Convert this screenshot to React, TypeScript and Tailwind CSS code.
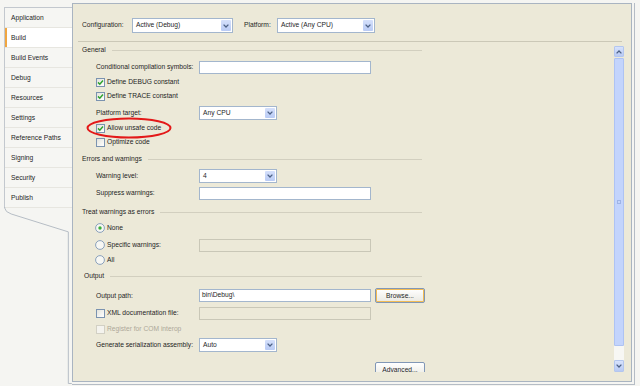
import React from 'react';

const tabs = ['Application', 'Build', 'Build Events', 'Debug', 'Resources', 'Settings', 'Reference Paths', 'Signing', 'Security', 'Publish'];

const Chevron = ({ up = false }: { up?: boolean }) => (
  <svg width="6" height="4" viewBox="0 0 6 4">
    <path d={up ? 'M0.6 3.4 L3 1 L5.4 3.4' : 'M0.6 0.6 L3 3 L5.4 0.6'} fill="none" stroke="#4d6185" strokeWidth="1.3" />
  </svg>
);

const Select = ({ value, className }: { value: string; className: string }) => (
  <div className={`flex items-center bg-white border border-[#a3b6cd] ${className}`}>
    <span className="flex-1 pl-[3px] leading-none">{value}</span>
    <div className="w-[10px] h-[calc(100%-2px)] mr-px flex items-center justify-center rounded-[1px] bg-gradient-to-b from-[#d5e0fb] to-[#b9cbf5]">
      <Chevron />
    </div>
  </div>
);

const TextBox = ({ value = '', disabled = false }: { value?: string; disabled?: boolean }) => (
  <div
    className={`w-[172px] h-[13px] border flex items-center pl-[2px] leading-none ${
      disabled ? 'bg-[#ece9d8] border-[#c9c7b7]' : 'bg-white border-[#a3b6cd]'
    }`}
  >
    {value}
  </div>
);

const Checkbox = ({ checked = false, disabled = false }: { checked?: boolean; disabled?: boolean }) => (
  <div
    className={`w-[9px] h-[9px] border flex items-center justify-center shrink-0 ${
      disabled ? 'border-[#d2d0c4] bg-[#f4f3ee]' : 'border-[#7b93b0] bg-gradient-to-br from-[#e3e3dc] to-white'
    }`}
  >
    {checked && (
      <svg width="7" height="7" viewBox="0 0 7 7">
        <path d="M1 3.4 L2.8 5.2 L6 1.6" fill="none" stroke="#2ea32e" strokeWidth="1.5" />
      </svg>
    )}
  </div>
);

const Radio = ({ checked = false }: { checked?: boolean }) => (
  <svg width="10" height="10" viewBox="0 0 10 10" className="shrink-0">
    <circle cx="5" cy="5" r="4.4" fill="#f7f7f3" stroke="#7f99b8" strokeWidth="0.9" />
    {checked && <circle cx="5" cy="5" r="1.7" fill="#3bb03b" />}
  </svg>
);

const Section = ({ title, className = '' }: { title: string; className?: string }) => (
  <div className={`flex items-center w-[340px] h-[12px] ${className}`}>
    <span>{title}</span>
    <div className="flex-1 h-px ml-[6px] bg-[#d2cfbf]" />
  </div>
);

const Button = ({ label, focused = false }: { label: string; focused?: boolean }) => (
  <div
    className={`w-[50px] h-[15px] rounded-[2px] border border-[#8197b6] flex items-center justify-center bg-gradient-to-b from-white to-[#eae9e2] ${
      focused ? 'shadow-[inset_0_0_0_1px_#f2bb54]' : ''
    }`}
  >
    {label}
  </div>
);

export default function App() {
  return (
    <div className="w-[640px] h-[386px] flex bg-[#f5f5f2] text-[6.7px] text-[#1e1e1e] font-['Liberation_Sans',Arial,sans-serif] overflow-hidden">
      {/* tab column */}
      <div className="w-[72px] shrink-0 flex flex-col pt-[7px]">
        <div className="ml-[4px] border-l border-t border-[#c3c8ce] bg-[#f6f6f3]">
          {tabs.map((t) => (
            <div
              key={t}
              className={`h-[20px] flex items-center pl-[6px] pt-px border-b border-[#e7e6e0] ${
                t === 'Build' ? 'bg-white shadow-[inset_2px_0_0_#f0a641]' : ''
              }`}
            >
              {t}
            </div>
          ))}
        </div>
        <svg width="72" height="180" viewBox="0 0 72 180" className="block -mt-px">
          <path d="M4.5 0 L4.5 1 Q5 5 11 7 L68.5 25 L68.5 177.5 L72 177.5" fill="none" stroke="#b5bcc5" strokeWidth="1" />
        </svg>
      </div>

      {/* panel */}
      <div className="mt-[3px] w-[563px] h-[382px] border-r border-b border-[#b5bcc5] shrink-0">
        <div className="w-[560px] h-[379px] border border-[#a9b4c1] bg-[#ece9d8] flex flex-col">
          <div className="flex items-center pt-[14px] pl-[9px]">
            <span className="w-[50px]">Configuration:</span>
            <Select value="Active (Debug)" className="w-[101px] h-[15px]" />
            <span className="w-[33px] ml-[11px]">Platform:</span>
            <Select value="Active (Any CPU)" className="w-[98px] h-[15px]" />
          </div>
          <div className="mt-[8px] ml-[5px] w-[544px] h-px bg-[#cbc8b7]" />

          <div className="flex h-[330px]">
            <div className="w-[541px] overflow-hidden pl-[9px] flex flex-col">
              <Section title="General" className="mt-[3px]" />
              <div className="ml-[14px] flex flex-col">
                <div className="mt-[5px] h-[14px] flex items-center">
                  <span className="w-[103px]">Conditional compilation symbols:</span>
                  <TextBox />
                </div>
                <div className="mt-[1px] h-[14px] flex items-center gap-[1px]">
                  <Checkbox checked />
                  <span className="ml-[1px]">Define DEBUG constant</span>
                </div>
                <div className="h-[14px] flex items-center gap-[1px]">
                  <Checkbox checked />
                  <span className="ml-[1px]">Define TRACE constant</span>
                </div>
                <div className="mt-[3px] h-[14px] flex items-center">
                  <span className="w-[103px]">Platform target:</span>
                  <Select value="Any CPU" className="w-[78px] h-[14px]" />
                </div>
                <div className="relative mt-[1px] h-[14px] flex items-center gap-[1px]">
                  <Checkbox checked />
                  <span className="ml-[1px]">Allow unsafe code</span>
                  <svg width="86" height="22" viewBox="0 0 86 22" className="absolute left-[-10px] top-[-4px] pointer-events-none">
                    <ellipse cx="43" cy="11" rx="41.5" ry="9.5" fill="none" stroke="#e31919" strokeWidth="2" />
                  </svg>
                </div>
                <div className="h-[14px] flex items-center gap-[1px]">
                  <Checkbox />
                  <span className="ml-[1px]">Optimize code</span>
                </div>
              </div>

              <Section title="Errors and warnings" className="mt-[5px]" />
              <div className="ml-[14px] flex flex-col">
                <div className="mt-[5px] h-[14px] flex items-center">
                  <span className="w-[103px]">Warning level:</span>
                  <Select value="4" className="w-[78px] h-[14px]" />
                </div>
                <div className="mt-[3px] h-[14px] flex items-center">
                  <span className="w-[103px]">Suppress warnings:</span>
                  <TextBox />
                </div>
              </div>

              <Section title="Treat warnings as errors" className="mt-[7px]" />
              <div className="ml-[13px] flex flex-col">
                <div className="mt-[4px] h-[14px] flex items-center gap-[2px]">
                  <Radio checked />
                  <span>None</span>
                </div>
                <div className="mt-[3px] h-[14px] flex items-center">
                  <div className="w-[104px] flex items-center gap-[2px]">
                    <Radio />
                    <span>Specific warnings:</span>
                  </div>
                  <TextBox disabled />
                </div>
                <div className="mt-[1px] h-[14px] flex items-center gap-[2px]">
                  <Radio />
                  <span>All</span>
                </div>
              </div>

              <Section title="Output" className="mt-[4px] pl-[2px] w-[340px]" />
              <div className="ml-[14px] flex flex-col">
                <div className="mt-[7px] h-[15px] flex items-center">
                  <span className="w-[103px]">Output path:</span>
                  <TextBox value="bin\Debug\" />
                  <div className="ml-[4px]">
                    <Button label="Browse..." focused />
                  </div>
                </div>
                <div className="mt-[3px] h-[14px] flex items-center">
                  <div className="w-[103px] flex items-center gap-[2px]">
                    <Checkbox />
                    <span>XML documentation file:</span>
                  </div>
                  <TextBox disabled />
                </div>
                <div className="mt-[2px] h-[14px] flex items-center gap-[2px] text-[#aca899]">
                  <Checkbox disabled />
                  <span>Register for COM interop</span>
                </div>
                <div className="mt-[2px] h-[14px] flex items-center">
                  <span className="w-[103px]">Generate serialization assembly:</span>
                  <Select value="Auto" className="w-[78px] h-[14px]" />
                </div>
                <div className="mt-[10px] ml-[279px] shrink-0">
                  <Button label="Advanced..." />
                </div>
              </div>
            </div>

            {/* scrollbar */}
            <div className="mt-[4px] w-[10px] h-[326px] flex flex-col">
              <div className="h-[11px] flex items-center justify-center rounded-[1px] bg-gradient-to-b from-[#d7e2fc] to-[#b8caf4] border border-[#b3c6ef]">
                <Chevron up />
              </div>
              <div className="h-[288px] mt-px rounded-[1px] bg-[#c3d4fc] border border-[#aec3f3] flex items-center justify-center">
                <div className="w-[4px] h-[4px] border border-[#9fb4e6]" />
              </div>
              <div className="flex-1 bg-[#f7f7f4]" />
              <div className="h-[12px] flex items-center justify-center rounded-[1px] bg-gradient-to-b from-[#d7e2fc] to-[#b8caf4] border border-[#b3c6ef]">
                <Chevron />
              </div>
            </div>
          </div>
        </div>
      </div>
    </div>
  );
}
